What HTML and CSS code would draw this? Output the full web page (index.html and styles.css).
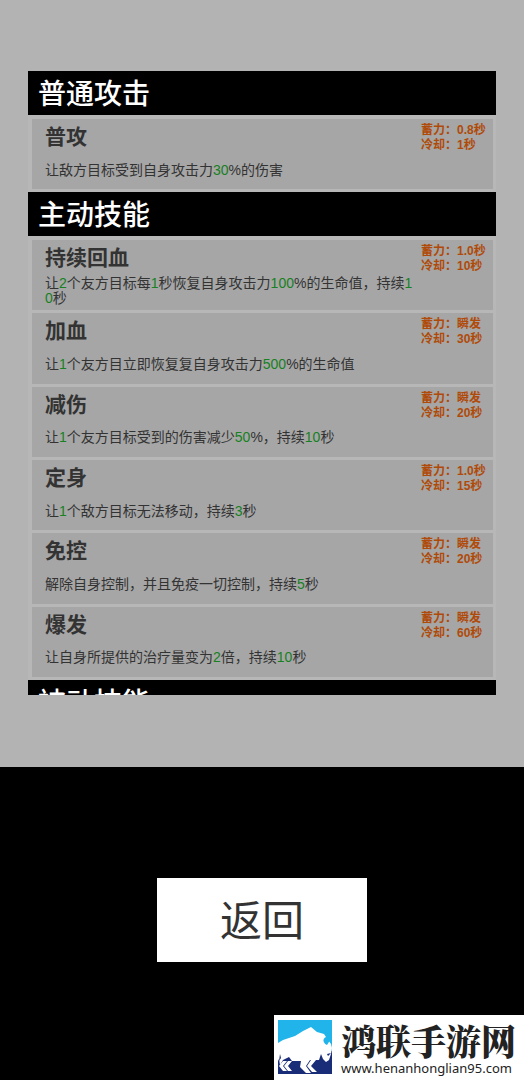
FILE: index.html
```
<!DOCTYPE html>
<html lang="zh-CN">
<head>
  <meta charset="utf-8">
  <meta name="viewport" content="width=device-width, initial-scale=1">
  <title>技能</title>
  <link rel="stylesheet" href="styles.css">
</head>
<body>
  <main class="panel">
    <div class="skill-list">
      <h2 class="group-title">普通攻击</h2>
      <ul class="group">
        <li class="skill">
          <div class="info">
            <h3>普攻</h3>
            <p><span>让敌方目标受到自身攻击力<b>30</b>%的伤害</span></p>
          </div>
          <div class="timing">蓄力：0.8秒<br>冷却：1秒</div>
        </li>
      </ul>

      <h2 class="group-title">主动技能</h2>
      <ul class="group group-active">
        <li class="skill">
          <div class="info">
            <h3>持续回血</h3>
            <p><span>让<b>2</b>个友方目标每<b>1</b>秒恢复自身攻击力<b>100</b>%的生命值，持续<b>10</b>秒</span></p>
          </div>
          <div class="timing">蓄力：1.0秒<br>冷却：10秒</div>
        </li>
        <li class="skill">
          <div class="info">
            <h3>加血</h3>
            <p><span>让<b>1</b>个友方目立即恢复复自身攻击力<b>500</b>%的生命值</span></p>
          </div>
          <div class="timing">蓄力：瞬发<br>冷却：30秒</div>
        </li>
        <li class="skill">
          <div class="info">
            <h3>减伤</h3>
            <p><span>让<b>1</b>个友方目标受到的伤害减少<b>50</b>%，持续<b>10</b>秒</span></p>
          </div>
          <div class="timing">蓄力：瞬发<br>冷却：20秒</div>
        </li>
        <li class="skill">
          <div class="info">
            <h3>定身</h3>
            <p><span>让<b>1</b>个敌方目标无法移动，持续<b>3</b>秒</span></p>
          </div>
          <div class="timing">蓄力：1.0秒<br>冷却：15秒</div>
        </li>
        <li class="skill">
          <div class="info">
            <h3>免控</h3>
            <p><span>解除自身控制，并且免疫一切控制，持续<b>5</b>秒</span></p>
          </div>
          <div class="timing">蓄力：瞬发<br>冷却：20秒</div>
        </li>
        <li class="skill">
          <div class="info">
            <h3>爆发</h3>
            <p><span>让自身所提供的治疗量变为<b>2</b>倍，持续<b>10</b>秒</span></p>
          </div>
          <div class="timing">蓄力：瞬发<br>冷却：60秒</div>
        </li>
      </ul>

      <h2 class="group-title">被动技能</h2>
    </div>
  </main>

  <div class="actions">
    <button type="button" class="back">返回</button>
  </div>

  <footer class="site">
    <svg class="site-logo" viewBox="0 0 54 54" aria-hidden="true">
      <path fill="#20b4ea" d="M0 0h54v31H0z"/>
      <path fill="#182c78" d="M0 31h54v23H0z"/>
      <path fill="#fff" d="M0 23L5 20 17 16 25 11 33 7 39 12 46 14 50 20 53 24 54 28 53 34 51 40 48 42 45 39 43 34 41 40H32L28 46 33 53H28L22 47 23 41H14L11 37 5 40 2 45 1 39 0 41z"/>
      <path fill="#fff" d="M5 41h4l-4 5 4 5H5l-4-5zM10 41h4l-4 5 4 5h-4l-4-5zM33 40h5l-5 6 6 6h-5l-5-6z"/>
      <path fill="#20b4ea" d="M47 12c5 2 7 7 2 13-4-2-5-6-1-8 1-1 0-3-1-5z"/>
      <path fill="#182c78" d="M49 34l4-1-3 3zM2 34l1 4-2 3z"/>
    </svg>
    <div class="site-text">
      <strong>鸿联手游网</strong>
      <a href="#">www.henanhonglian95.com</a>
    </div>
  </footer>
</body>
</html>
```

FILE: styles.css
```
* {
  box-sizing: border-box;
}

body {
  margin: 0;
  min-height: 100vh;
  display: flex;
  flex-direction: column;
  background: #000;
  color: #333;
  font-family: "Liberation Sans", "Noto Sans CJK SC", sans-serif;
}

h2, h3, p, ul {
  margin: 0;
  padding: 0;
}

.panel {
  padding: 71px 28px 72px;
  background: #b3b3b3;
}

.skill-list {
  height: 624px;
  overflow-y: auto;
  scrollbar-width: none;
  background: #b7b7b7;
}

.group-title {
  height: 44px;
  padding-left: 10px;
  background: #000;
  color: #fff;
  font-size: 28px;
  font-weight: 500;
  line-height: 48px;
}

.group {
  display: flex;
  flex-direction: column;
  gap: 3px;
  padding: 4px 3px 3px 4px;
  list-style: none;
}

.group-active {
  min-height: 444px;
}

.skill {
  flex: 1 1 0px;
  display: flex;
  min-height: 70px;
  padding-left: 13px;
  background: #a6a6a6;
}

.info {
  flex: 1;
  display: flex;
  flex-direction: column;
  padding-right: 6px;
}

.info h3 {
  padding-top: 4px;
  font-size: 21px;
  font-weight: 700;
  line-height: 28px;
}

.info p {
  flex: 1;
  display: flex;
  align-items: center;
  font-size: 14px;
  line-height: 15px;
  word-break: break-all;
}

.info b {
  color: #17801f;
  font-weight: 400;
}

.timing {
  width: 72px;
  padding-top: 4px;
  color: #b04a08;
  font-size: 12px;
  font-weight: 700;
  line-height: 15px;
}

.actions {
  flex: 1;
  padding-top: 111px;
  text-align: center;
}

.back {
  width: 40%;
  height: 84px;
  padding: 0 0 6px;
  border: 0;
  background: #fff;
  color: #333;
  font: 400 42px "Noto Sans CJK SC", sans-serif;
  cursor: pointer;
}

.site {
  align-self: flex-end;
  display: flex;
  align-items: flex-start;
  gap: 9px;
  height: 65px;
  padding: 5px 8px 0 4px;
  background: #fff;
}

.site-logo {
  width: 54px;
  height: 54px;
}

.site-text {
  display: flex;
  flex-direction: column;
  color: #222;
}

.site-text strong {
  font-family: "Noto Serif CJK SC", "Noto Sans CJK SC", serif;
  font-size: 35px;
  font-weight: 900;
  line-height: 40px;
}

.site-text a {
  color: #222;
  font-family: "Noto Sans", sans-serif;
  font-size: 13px;
  line-height: 16px;
  text-decoration: none;
}
```
